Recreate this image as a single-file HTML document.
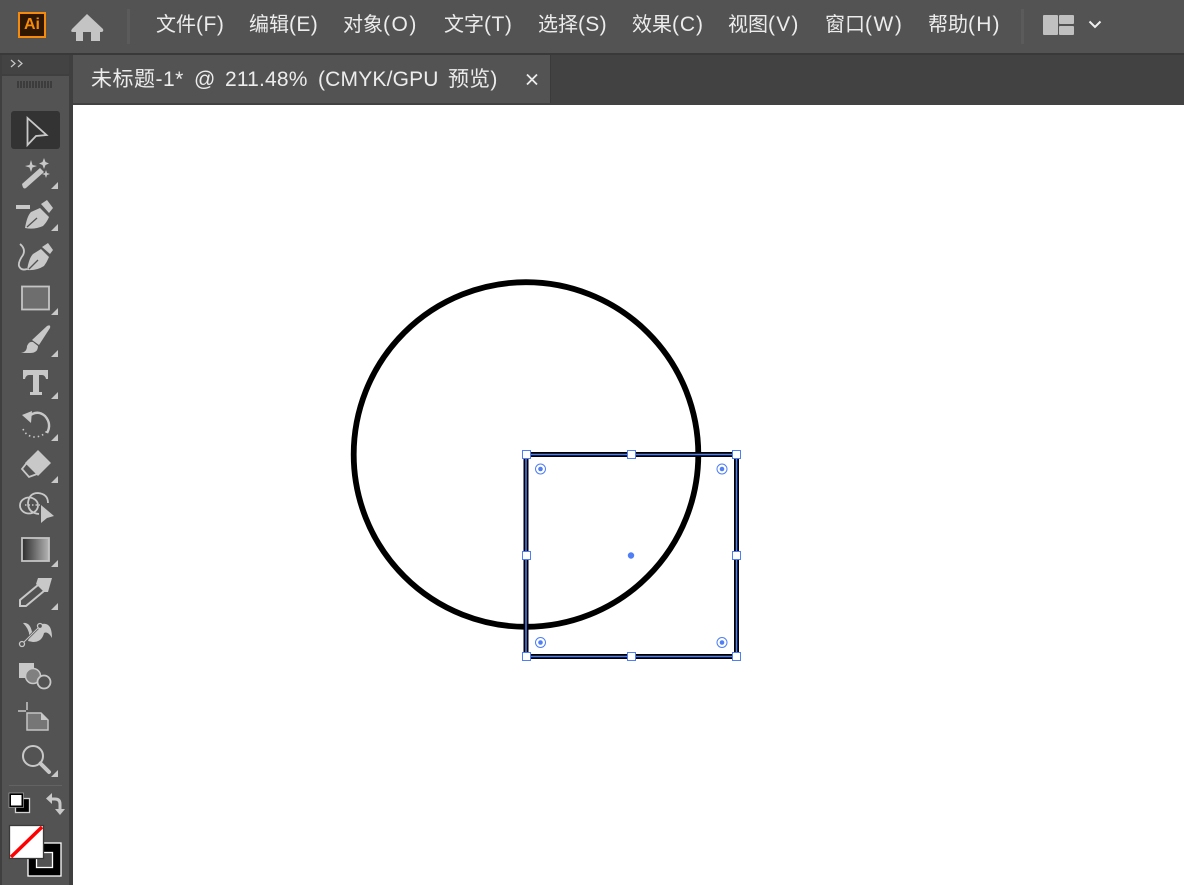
<!DOCTYPE html>
<html lang="zh-CN">
<head>
<meta charset="utf-8">
<title>Illustrator</title>
<style>
html,body{margin:0;padding:0;width:1184px;height:885px;overflow:hidden;background:#fff}
body{position:relative;font-family:"Liberation Sans","Noto Sans CJK SC",sans-serif}
.abs{position:absolute}
.m{position:absolute;top:12px;font-size:20px;line-height:26px;color:#ececec;white-space:nowrap}
.m span{font-size:21px}
.t{position:absolute;top:67px;font-size:21px;letter-spacing:.18px;line-height:26px;color:#ececec;white-space:pre}
</style>
</head>
<body>
<div class="abs" style="left:0;top:0;width:1184px;height:53px;background:#535353"></div>
<div class="abs" style="left:0;top:53px;width:1184px;height:2px;background:#393939"></div>
<div class="abs" style="left:73px;top:55px;width:1111px;height:50px;background:#424242"></div>
<div class="abs" style="left:73px;top:55px;width:477px;height:48px;background:#535353"></div>
<div class="abs" style="left:550px;top:55px;width:1px;height:48px;background:#3a3a3a"></div>
<div class="abs" style="left:73px;top:103px;width:477px;height:2px;background:#424242"></div>
<div class="abs" style="left:0;top:55px;width:73px;height:830px;background:#3f3f3f"></div>
<div class="abs" style="left:2px;top:55px;width:67px;height:19px;background:#434343"></div>
<div class="abs" style="left:2px;top:76px;width:67px;height:809px;background:#535353"></div>

<div class="m" style="left:156px">文件<span style="letter-spacing:.55px">(F)</span></div>
<div class="m" style="left:249px">编辑<span style="letter-spacing:.4px">(E)</span></div>
<div class="m" style="left:343px">对象<span style="letter-spacing:1.5px">(O)</span></div>
<div class="m" style="left:444px">文字<span style="letter-spacing:.55px">(T)</span></div>
<div class="m" style="left:538px">选择<span style="letter-spacing:.3px">(S)</span></div>
<div class="m" style="left:632px">效果<span style="letter-spacing:.9px">(C)</span></div>
<div class="m" style="left:728px">视图<span style="letter-spacing:1.2px">(V)</span></div>
<div class="m" style="left:825px">窗口<span style="letter-spacing:1.5px">(W)</span></div>
<div class="m" style="left:928px">帮助<span style="letter-spacing:1.2px">(H)</span></div>
<div class="t" style="left:91px;letter-spacing:.5px">未标题-1*</div>
<div class="t" style="left:194px">@</div>
<div class="t" style="left:225px">211.48%</div>
<div class="t" style="left:318px">(CMYK/GPU</div>
<div class="t" style="left:448px">预览)</div>

<div class="abs" style="left:18px;top:12px;width:28px;height:26px;box-sizing:border-box;border:2px solid #f58a0b;background:#2e1600;color:#f58a0b;font-size:16px;font-weight:bold;line-height:21px;text-align:center">Ai</div>

<svg class="abs" style="left:0;top:0" width="1184" height="105" viewBox="0 0 1184 105">
  <path d="M87 14 L103 29 Q104 32 101 32 L100 32 L100 41 L91 41 L91 32 L83 32 L83 41 L76 41 L76 32 L73 32 Q70 32 72 29 Z" fill="#c4c4c4"/>
  <rect x="127" y="9" width="3" height="35" fill="#5b5b5b"/>
  <rect x="1021" y="9" width="3" height="35" fill="#5b5b5b"/>
  <rect x="1043" y="15" width="15" height="20" rx="1" fill="#c0c0c0"/>
  <rect x="1059" y="15" width="15" height="9" rx="1" fill="#c0c0c0"/>
  <rect x="1059" y="26" width="15" height="9" rx="1" fill="#c0c0c0"/>
  <path d="M1089.500 21.500 L1095 27 L1100.500 21.500" fill="none" stroke="#efefef" stroke-width="2"/>
  <path d="M527 74.500 L537 84.500 M537 74.500 L527 84.500" stroke="#ececec" stroke-width="1.800"/>
  <path d="M11 60 L15 63.500 L11 67 M18 60 L22 63.500 L18 67" fill="none" stroke="#c8c8c8" stroke-width="1.200"/>
  <g fill="#3c3c3c"><rect x="17" y="81" width="2" height="7"/><rect x="20" y="81" width="2" height="7"/><rect x="23" y="81" width="2" height="7"/><rect x="26" y="81" width="2" height="7"/><rect x="29" y="81" width="2" height="7"/><rect x="32" y="81" width="2" height="7"/><rect x="35" y="81" width="2" height="7"/><rect x="38" y="81" width="2" height="7"/><rect x="41" y="81" width="2" height="7"/><rect x="44" y="81" width="2" height="7"/><rect x="47" y="81" width="2" height="7"/><rect x="50" y="81" width="2" height="7"/></g>
</svg>

<!-- toolbar icons -->
<svg class="abs" style="left:0;top:105px" width="73" height="780" viewBox="0 105 73 780">
  <rect x="11" y="111" width="49" height="38" rx="3" fill="#333"/>
  <path d="M27.500 118 L46.500 135 L36 136 L27.500 145 Z" fill="none" stroke="#c8c8c8" stroke-width="1.800"/>

  <g fill="#c8c8c8">
    <path d="M58 182 V189 H51 Z"/><path d="M58 224 V231 H51 Z"/><path d="M58 308 V315 H51 Z"/><path d="M58 350 V357 H51 Z"/><path d="M58 392 V399 H51 Z"/><path d="M58 434 V441 H51 Z"/><path d="M58 476 V483 H51 Z"/><path d="M58 560 V567 H51 Z"/><path d="M58 603 V610 H51 Z"/><path d="M58 770 V777 H51 Z"/>
    <!-- wand -->
    <path d="M22 184 L40 168 L44 172 L26 188 Q23 190 22 184Z"/>
    <path d="M31 160 L32.500 165 L37 166 L32.500 167.500 L31 172 L29.500 167.500 L25 166 L29.500 165Z"/>
    <path d="M44 158 L45.500 162 L49 163.500 L45.500 165 L44 169 L42.500 165 L39 163.500 L42.500 162Z"/>
    <path d="M46 170 L47 173 L50 174 L47 175 L46 178 L45 175 L42 174 L45 173Z"/>
    <!-- pen -->
    <rect x="16" y="205" width="14" height="4"/>
    <path d="M25 228 Q27 216 31 212 L40 208 L49 217 Q47 222 43 226 Q34 230 25 228Z"/>
    <path d="M41 204 L47 200 L53 208 L49 213Z"/>
    <!-- curvature pen -->
    <path d="M27 270 Q29 258 33 254 L41 249 L49 257 Q47 262 44 266 Q36 271 27 270Z"/>
    <path d="M42 247 L48 243 L53 250 L50 254Z"/>
    <!-- brush -->
    <path d="M32 340 L47 326 Q51 324 50 328 L39 345 Z"/>
    <path d="M21 353 Q27 352 27 346 Q29 341 33 342 L38 346 Q38 353 30 353 Z"/>
    <!-- type -->
    <path d="M23 370 H48 V379 H46 Q45 375 42 375 H39 V392 H42 V395 H30 V392 H33 V375 H29 Q26 375 25 379 H23 Z"/>
    <!-- eraser -->
    <path d="M38 450 L51 463 L38 476 L25 463Z"/>
    <!-- shape builder cursor -->
    <path d="M41 505 L54 516 L47 518 L41 523Z"/>
    <!-- eyedropper head -->
    <path d="M38 578 L52 578 L48 592 L44 592 L36 584 Z"/>
    <!-- shaper -->
    <rect x="19" y="663" width="15" height="15"/>
    <!-- symbol sprayer -->
    <path d="M23 623 Q30 622 32 632 L42 624 Q52 622 52 638 Q48 631 44 633 Q42 642 33 642 L28 641 Q32 632 23 623Z"/>
  </g>
  <!-- nib slits -->
  <path d="M27 227 L37 218" stroke="#535353" stroke-width="1.300"/>
  <path d="M29 269 L38 260" stroke="#535353" stroke-width="1.300"/>
  <!-- rect tool -->
  <rect x="22" y="286.500" width="27" height="23" fill="#6e6e6e" stroke="#c4c4c4" stroke-width="1.800"/>
  <!-- curvature tail -->
  <path d="M20 244 Q26 249 23 255 Q18 262 19 266 Q21 271 27 269" fill="none" stroke="#c8c8c8" stroke-width="1.800"/>
  <!-- rotate -->
  <path d="M28 417 Q37 409 45 416 Q52 424 47 433" fill="none" stroke="#c8c8c8" stroke-width="2.400"/>
  <path d="M22 415 L32 411 L31 423Z" fill="#c8c8c8"/>
  <path d="M23 429 Q26 436 34 437 Q42 437 47 431" fill="none" stroke="#c8c8c8" stroke-width="1.600" stroke-dasharray="1.500 3"/>
  <!-- eraser tail -->
  <path d="M29 460 L22 469 L29 477 L37 474" fill="none" stroke="#c8c8c8" stroke-width="1.800"/>
  <!-- shape builder -->
  <ellipse cx="29" cy="505.500" rx="9" ry="8" fill="none" stroke="#c8c8c8" stroke-width="1.800"/>
  <path d="M39 514 Q28 513 28 503 Q29 493 38 493 Q48 494 48 503" fill="none" stroke="#c8c8c8" stroke-width="1.800"/>
  <path d="M25 505 H40" stroke="#c8c8c8" stroke-width="1.500" stroke-dasharray="1.500 2"/>
  <!-- gradient -->
  <defs><linearGradient id="g" x1="0" x2="1" y1="0" y2="0"><stop offset="0" stop-color="#2c2c2c"/><stop offset="1" stop-color="#b5b5b5"/></linearGradient></defs>
  <rect x="22" y="538" width="27" height="23" fill="url(#g)" stroke="#c4c4c4" stroke-width="1.800"/>
  <!-- eyedropper body -->
  <path d="M38 585 L20 600 V606 H26 L44 591" fill="none" stroke="#c8c8c8" stroke-width="2"/>
  <!-- symbol node line -->
  <path d="M22 644 L40 626" stroke="#535353" stroke-width="2.500"/>
  <path d="M22 644 L40 626" stroke="#c8c8c8" stroke-width="1"/>
  <circle cx="22" cy="644" r="2.500" fill="#535353" stroke="#c8c8c8" stroke-width="1.300"/>
  <circle cx="40" cy="626" r="2.500" fill="#535353" stroke="#c8c8c8" stroke-width="1.300"/>
  <!-- shape group -->
  <circle cx="33" cy="676" r="7.500" fill="#808080" stroke="#c8c8c8" stroke-width="1.500"/>
  <circle cx="44" cy="682" r="6.500" fill="#535353" stroke="#c8c8c8" stroke-width="1.800"/>
  <!-- artboard -->
  <path d="M27 713 H41 L48 720 V730 H27 Z" fill="#767676" stroke="#c4c4c4" stroke-width="1.500"/>
  <path d="M18 711 H26 M27 702 V710" stroke="#c8c8c8" stroke-width="1.500"/>
  <path d="M41 713 V720 H48 Z" fill="#c8c8c8"/>
  <!-- zoom -->
  <circle cx="33" cy="756" r="10" fill="none" stroke="#c8c8c8" stroke-width="2"/>
  <path d="M40.500 763.500 L49 772" stroke="#c8c8c8" stroke-width="4" stroke-linecap="round"/>
  <rect x="9" y="785" width="53" height="1" fill="#636363"/>
  <!-- default colors -->
  <rect x="15.500" y="798.500" width="14" height="14" fill="#000" stroke="#d2d2d2" stroke-width="1.300"/>
  <rect x="10" y="794" width="12.500" height="12.500" fill="#fff" stroke="#000" stroke-width="2"/>
  <rect x="9" y="793" width="14.500" height="14.500" fill="none" stroke="#bcbcbc" stroke-width=".6"/>
  <!-- swap -->
  <path d="M49 799 H55 Q60 799 60 804 V811" fill="none" stroke="#c8c8c8" stroke-width="3"/>
  <path d="M52 793 V804 L46 798.500Z M55 809 H65 L60 815Z" fill="#c8c8c8"/>
  <!-- fill/stroke -->
  <rect x="28" y="843" width="33" height="33" fill="#000" stroke="#fff" stroke-width="1.300"/>
  <rect x="36.500" y="852.500" width="16" height="15" fill="#535353" stroke="#fff" stroke-width="1.300"/>
  <rect x="9.500" y="825.500" width="34" height="33" fill="#fff" stroke="#3a3a3a" stroke-width="1.300"/>
  <path d="M11 857 L42 827" stroke="#f00" stroke-width="3.500"/>
</svg>

<!-- artwork -->
<svg class="abs" style="left:73px;top:105px" width="1111" height="780" viewBox="73 105 1111 780">
  <circle cx="526" cy="454.500" r="172.300" fill="none" stroke="#000" stroke-width="5.800"/>
  <rect x="526" y="454.500" width="210.500" height="202" fill="none" stroke="#000" stroke-width="5"/>
  <rect x="526" y="454.500" width="210.500" height="202" fill="none" stroke="#4f7ef5" stroke-width="1.500"/>
  <g fill="#fff" stroke="#4f7ef5" stroke-width="1">
    <rect x="522.500" y="450.500" width="8" height="8"/><rect x="627.500" y="450.500" width="8" height="8"/><rect x="732.500" y="450.500" width="8" height="8"/>
    <rect x="522.500" y="551.500" width="8" height="8"/><rect x="732.500" y="551.500" width="8" height="8"/>
    <rect x="522.500" y="652.500" width="8" height="8"/><rect x="627.500" y="652.500" width="8" height="8"/><rect x="732.500" y="652.500" width="8" height="8"/>
  </g>
  <g fill="none" stroke="#4f7ef5" stroke-width="1">
    <circle cx="540.500" cy="469" r="5"/><circle cx="722" cy="469" r="5"/><circle cx="540.500" cy="642.500" r="5"/><circle cx="722" cy="642.500" r="5"/>
  </g>
  <g fill="#4f7ef5">
    <circle cx="540.500" cy="469" r="2.300"/><circle cx="722" cy="469" r="2.300"/><circle cx="540.500" cy="642.500" r="2.300"/><circle cx="722" cy="642.500" r="2.300"/>
    <circle cx="631" cy="555.500" r="3.200"/>
  </g>
</svg>
</body>
</html>
